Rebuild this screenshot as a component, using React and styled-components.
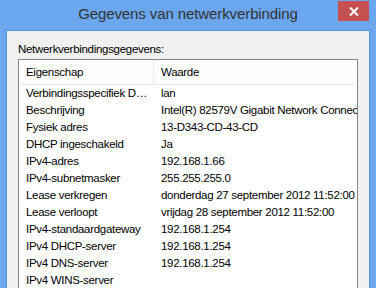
import React from 'react'
import styled, { createGlobalStyle } from 'styled-components'

const GlobalStyle = createGlobalStyle`
  html, body {
    margin: 0;
    padding: 0;
    background: #6ba7ee;
    overflow: hidden;
  }
`

const rows = [
  ['Verbindingsspecifiek DNS-achtervoegsel', 'lan'],
  ['Beschrijving', 'Intel(R) 82579V Gigabit Network Connection'],
  ['Fysiek adres', '13-D343-CD-43-CD'],
  ['DHCP ingeschakeld', 'Ja'],
  ['IPv4-adres', '192.168.1.66'],
  ['IPv4-subnetmasker', '255.255.255.0'],
  ['Lease verkregen', 'donderdag 27 september 2012 11:52:00'],
  ['Lease verloopt', 'vrijdag 28 september 2012 11:52:00'],
  ['IPv4-standaardgateway', '192.168.1.254'],
  ['IPv4 DHCP-server', '192.168.1.254'],
  ['IPv4 DNS-server', '192.168.1.254'],
  ['IPv4 WINS-server', ''],
]

function App() {
  return (
    <>
      <GlobalStyle />
      <Window>
        <TitleBar>
          <span />
          <Title>Gegevens van netwerkverbinding</Title>
          <CloseButton aria-label="Sluiten">
            <svg width="10" height="9" viewBox="0 0 10 9">
              <path d="M1 0.5 L9 8.5 M9 0.5 L1 8.5" stroke="#fff" strokeWidth="2" />
            </svg>
          </CloseButton>
        </TitleBar>
        <Client>
          <Label>Netwerkverbindingsgegevens:</Label>
          <ListBox>
            <HeaderRow>
              <HeaderCell>Eigenschap</HeaderCell>
              <HeaderCell $value>Waarde</HeaderCell>
            </HeaderRow>
            {rows.map(([k, v]) => (
              <Row key={k}>
                <Cell $ellipsis>{k}</Cell>
                <Cell $value>{v}</Cell>
              </Row>
            ))}
          </ListBox>
        </Client>
      </Window>
    </>
  )
}

const uiFont = `
  font-family: "Liberation Sans", Arial, sans-serif;
  font-size: 11.5px;
  letter-spacing: -0.3px;
  color: #000;
`

const Window = styled.div`
  width: 376px;
  height: 288px;
  background: #6ba7ee;
  padding: 0 6px;
  box-sizing: border-box;
  display: flex;
  flex-direction: column;
`

const TitleBar = styled.div`
  height: 30px;
  display: grid;
  grid-template-columns: 1fr auto 1fr;
  align-items: start;
  flex-shrink: 0;
`

const Title = styled.div`
  font-family: "Liberation Sans", Arial, sans-serif;
  font-size: 15px;
  letter-spacing: -0.1px;
  line-height: 20px;
  padding-top: 4px;
  color: #333;
  white-space: nowrap;
`

const CloseButton = styled.button`
  justify-self: end;
  margin: 1px 1px 0 0;
  width: 31px;
  height: 20px;
  border: none;
  padding: 0;
  background: #c75050;
  display: flex;
  align-items: center;
  justify-content: center;
`

const Client = styled.div`
  flex: 1;
  background: #f0f0f0;
  border: 1px solid #5b93d8;
  border-bottom: none;
  padding: 10px 11px 0;
  min-height: 0;
  overflow: hidden;
`

const Label = styled.div`
  ${uiFont}
  line-height: 16px;
  margin-bottom: 2px;
`

const ListBox = styled.div`
  background: #fff;
  border: 1px solid #828790;
  border-bottom: none;
  height: 260px;
  overflow: hidden;
`

const HeaderRow = styled.div`
  display: grid;
  grid-template-columns: 134px 1fr;
  height: 24px;
  border-bottom: 1px solid #e3ebf5;
  background: linear-gradient(#ffffff, #fcfcfd);
`

const HeaderCell = styled.div`
  ${uiFont}
  line-height: 24px;
  padding-left: ${p => (p.$value ? '7px' : '7px')};
  border-left: ${p => (p.$value ? '1px solid #e5ecf4' : 'none')};
  white-space: nowrap;
`

const Row = styled.div`
  display: grid;
  grid-template-columns: 135px 1fr;
  height: 17px;
`

const Cell = styled.div`
  ${uiFont}
  line-height: 17px;
  padding-left: 7px;
  padding-right: ${p => (p.$ellipsis ? '1px' : '0')};
  white-space: nowrap;
  overflow: hidden;
  text-overflow: ${p => (p.$ellipsis ? 'ellipsis' : 'clip')};
`

export default App
